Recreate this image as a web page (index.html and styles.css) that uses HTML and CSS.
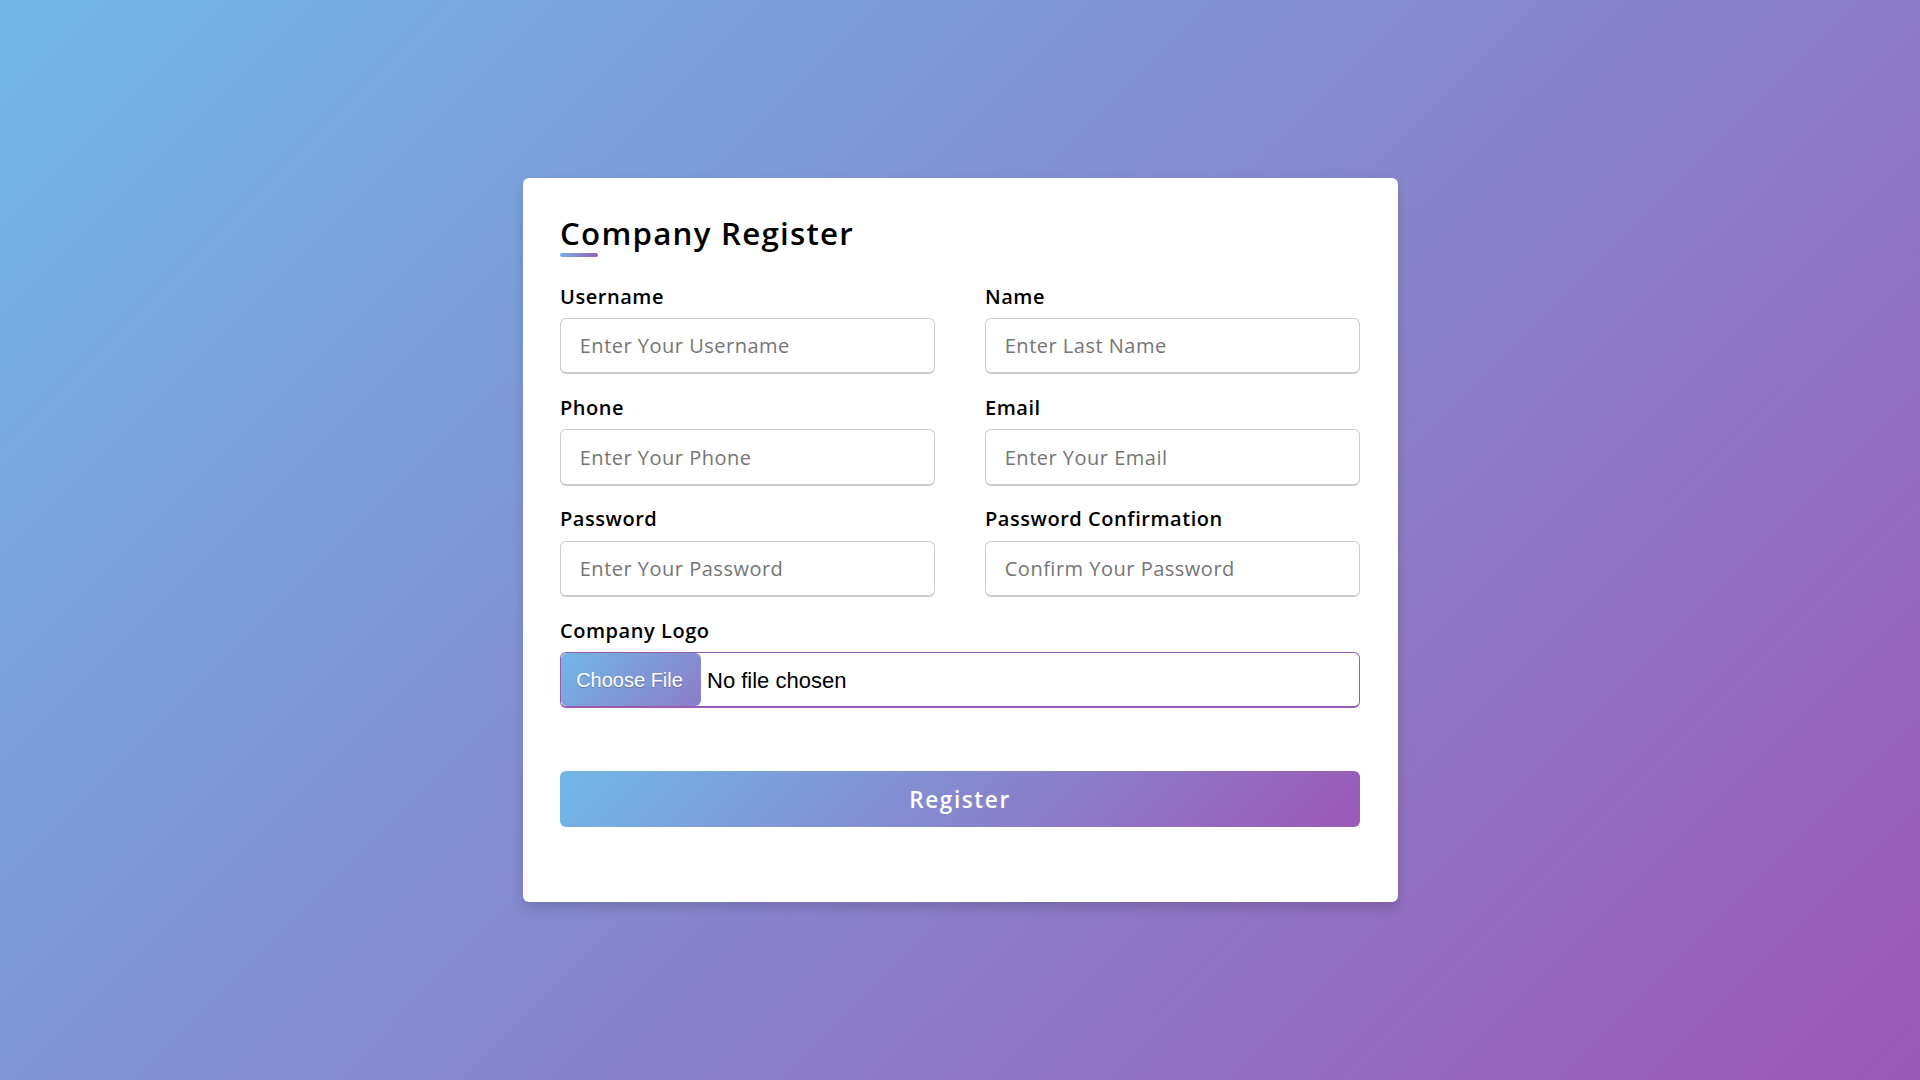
FILE: index.html
```html
<!DOCTYPE html>
<html lang="en">
<head>
<meta charset="utf-8">
<title>Company Register</title>
<link rel="stylesheet" href="styles.css">
</head>
<body>
<div class="container">
  <div class="title">Company Register</div>
  <form class="content" action="#">
    <div class="user-details">
      <div class="input-box">
        <span class="details">Username</span>
        <input type="text" placeholder="Enter Your Username">
      </div>
      <div class="input-box">
        <span class="details">Name</span>
        <input type="text" placeholder="Enter Last Name">
      </div>
      <div class="input-box">
        <span class="details">Phone</span>
        <input type="text" placeholder="Enter Your Phone">
      </div>
      <div class="input-box">
        <span class="details">Email</span>
        <input type="text" placeholder="Enter Your Email">
      </div>
      <div class="input-box">
        <span class="details">Password</span>
        <input type="password" placeholder="Enter Your Password">
      </div>
      <div class="input-box">
        <span class="details">Password Confirmation</span>
        <input type="password" placeholder="Confirm Your Password">
      </div>
      <div class="input-box full">
        <span class="details">Company Logo</span>
        <label class="file">
          <input type="file" class="file-input">
          <span class="file-btn">Choose File</span>
          <span class="file-name">No file chosen</span>
        </label>
      </div>
    </div>
    <div class="button">
      <input type="submit" value="Register">
    </div>
  </form>
</div>
</body>
</html>
```
FILE: styles.css
```css
* {
  margin: 0;
  padding: 0;
  box-sizing: border-box;
}
html, body {
  height: 100%;
}
body {
  display: flex;
  align-items: center;
  justify-content: center;
  background: linear-gradient(135deg, #71b7e6, #9b59b6);
  font-family: "Open Sans", "Noto Sans", sans-serif;
}
.container {
  width: 875px;
  background: #fff;
  padding: 31px 37.5px;
  border-radius: 6px;
  box-shadow: 0 6px 12px rgba(0, 0, 0, 0.15);
}
.title {
  position: relative;
  font-size: 31.25px;
  font-weight: 600;
  letter-spacing: 1.25px;
  line-height: 48px;
  color: #000;
}
.title::before {
  content: "";
  position: absolute;
  left: 0;
  bottom: 0;
  height: 4px;
  width: 37.5px;
  border-radius: 6px;
  background: linear-gradient(135deg, #71b7e6, #9b59b6);
}
.user-details {
  display: flex;
  flex-wrap: wrap;
  justify-content: space-between;
  margin: 25px 0 0 0;
}
.input-box {
  width: calc(50% - 25px);
  margin-bottom: 18.75px;
}
.input-box.full {
  width: 100%;
  margin-bottom: 0;
}
.details {
  display: block;
  font-size: 20px;
  font-weight: 600;
  letter-spacing: 0.55px;
  line-height: 30px;
  margin-bottom: 6.25px;
  color: #000;
}
.input-box input {
  display: block;
  height: 56.25px;
  width: 100%;
  outline: none;
  font-family: inherit;
  font-size: 20px;
  letter-spacing: 0.5px;
  border-radius: 6px;
  padding-left: 18.75px;
  border: 1px solid #ccc;
  border-bottom-width: 2px;
  background: #fff;
}
.input-box input::placeholder {
  color: #757575;
}
.file {
  display: flex;
  align-items: stretch;
  height: 56.25px;
  border: 1px solid #9b59b6;
  border-bottom-width: 2px;
  border-radius: 6px;
  overflow: hidden;
  cursor: pointer;
  font-family: "Liberation Sans", Arial, sans-serif;
  font-size: 20px;
  color: #000;
}
.input-box input.file-input {
  display: none;
}
.file-btn {
  display: flex;
  align-items: center;
  justify-content: center;
  width: 140px;
  padding: 2px 3px 0 0;
  border-radius: 6px;
  color: #fff;
  text-shadow: 0 1px 1px rgba(0, 0, 0, 0.25);
  background: linear-gradient(135deg, #71b7e6, #8c7dc8);
}
.file-name {
  display: flex;
  align-items: center;
  padding: 2px 0 0 6px;
  font-size: 22px;
}
.button {
  height: 56.25px;
  margin: 63px 0 43.75px 0;
}
.button input {
  height: 100%;
  width: 100%;
  border-radius: 6px;
  border: none;
  color: #fff;
  font-family: inherit;
  font-size: 22.5px;
  font-weight: 600;
  letter-spacing: 1.6px;
  cursor: pointer;
  background: linear-gradient(135deg, #71b7e6, #8c7dc8);
  background: linear-gradient(135deg, #71b7e6, #9b59b6);
}
```
